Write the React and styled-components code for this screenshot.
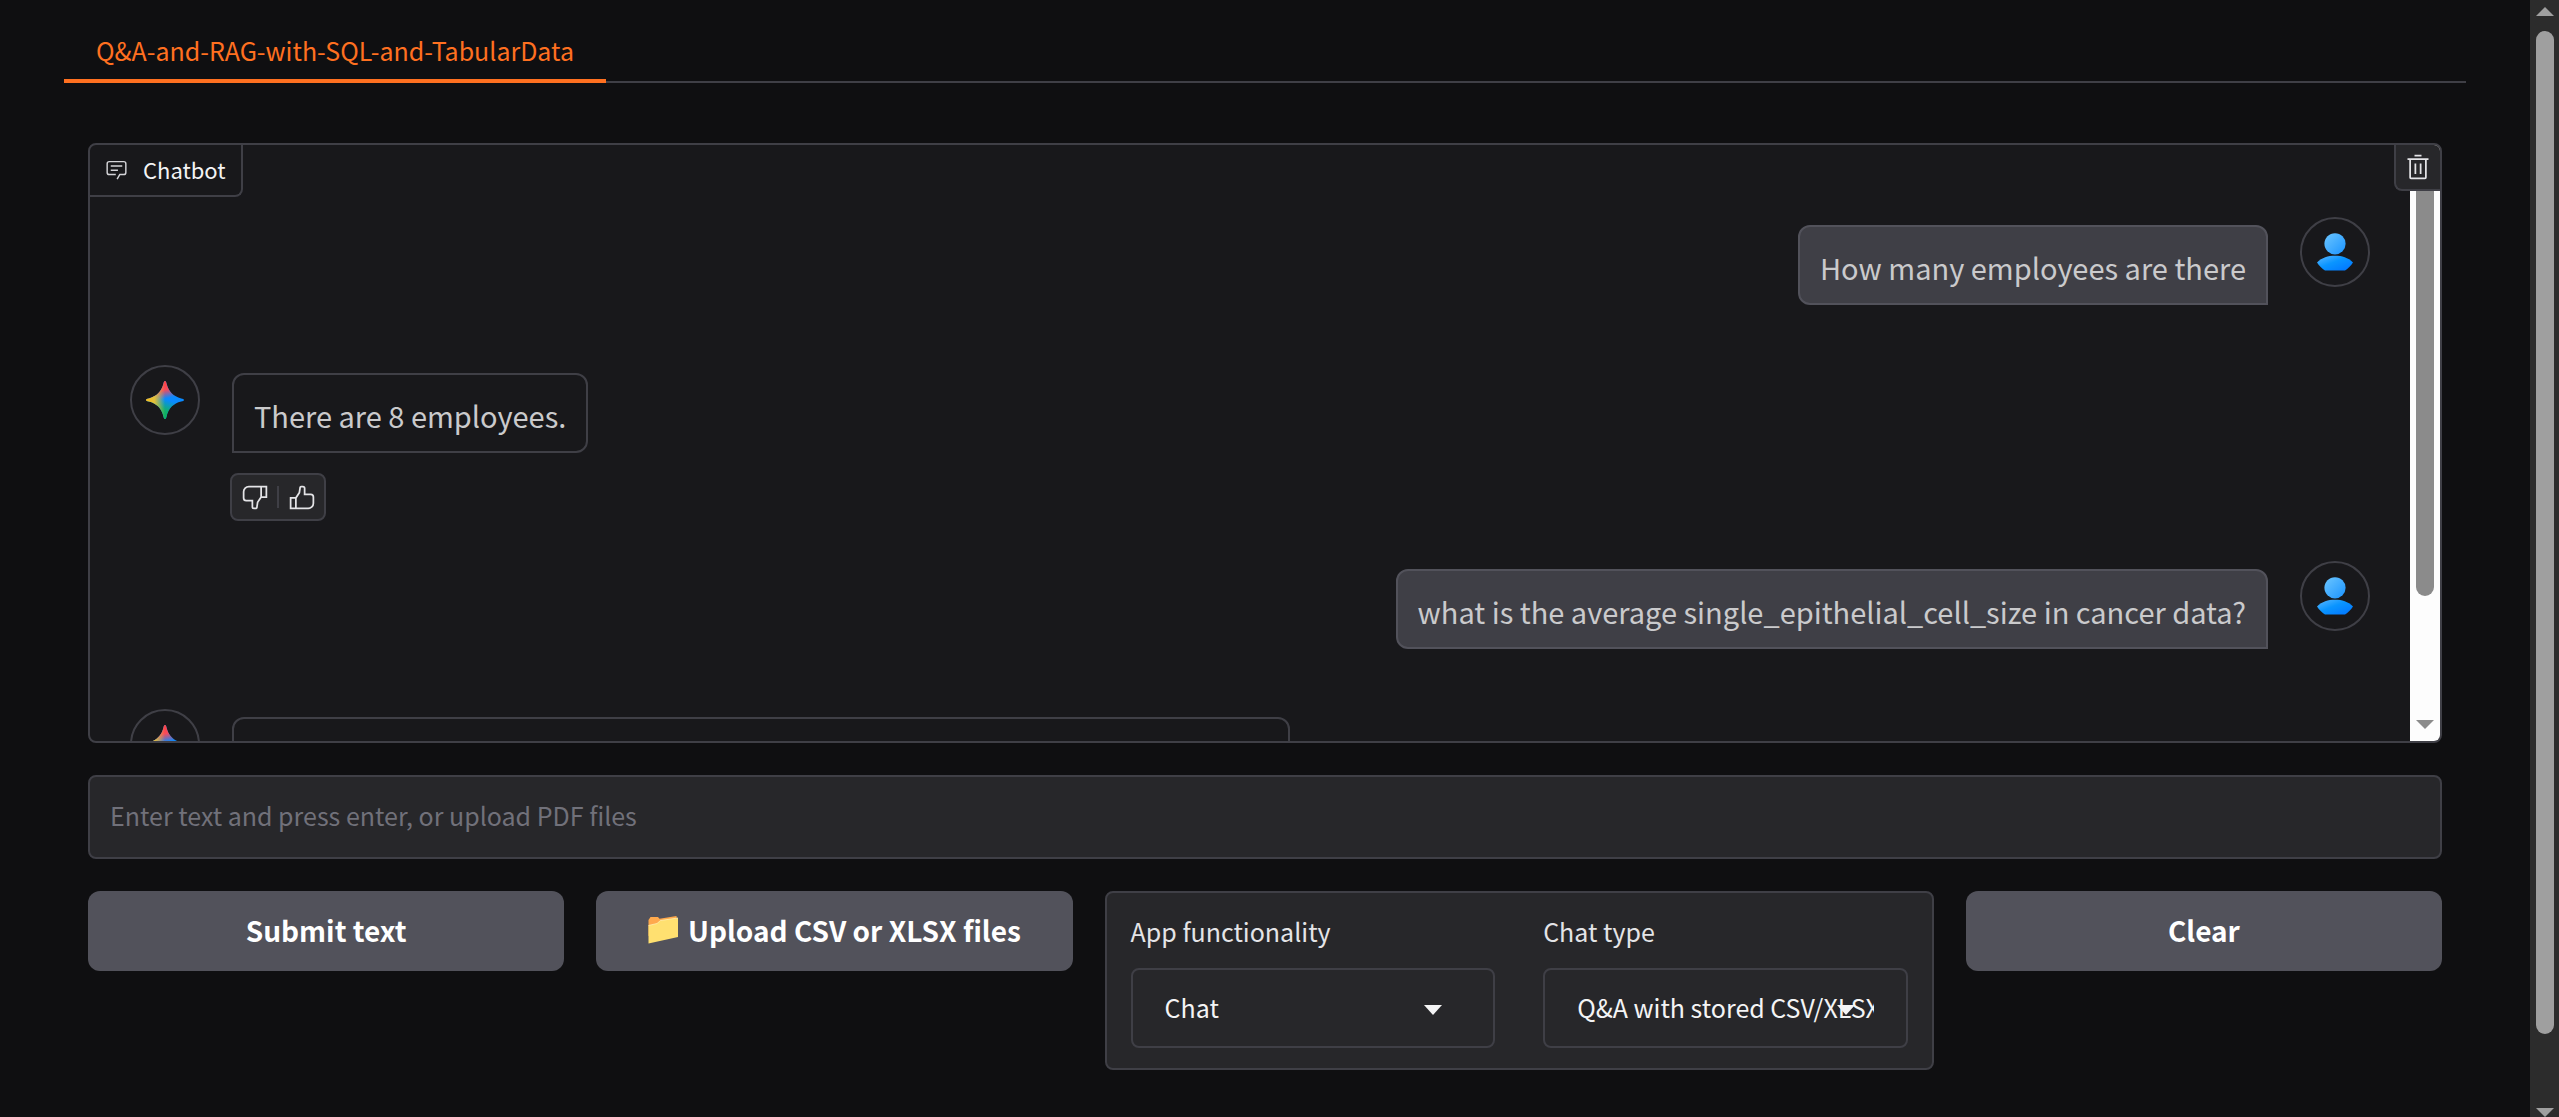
import React, { useId } from "react";
import styled, { createGlobalStyle, css } from "styled-components";

const color = {
  page: "#0f0f11",
  block: "#18181b",
  field: "#27272a",
  line: "#3f3f46",
  button: "#52525b",
  accent: "#ff7020",
  text: "#f4f4f5",
  muted: "#71717a",
};

const GlobalStyle = createGlobalStyle`
  *, *::before, *::after { box-sizing: border-box; }
  body {
    margin: 0;
    background: ${color.page};
    color: ${color.text};
    font-family: "Noto Sans CJK SC", "Noto Sans", sans-serif;
  }
  button, input, select { font: inherit; color: inherit; }
`;

const Shell = styled.div`
  display: grid;
  grid-template-columns: minmax(0, 1fr) 29px;
  height: 100vh;
  overflow: hidden;
`;

const Page = styled.main`
  padding: 20px 64px 0;
`;

const TabBar = styled.div`
  display: flex;
  height: 63px;
  border-bottom: 2px solid ${color.line};
`;

const Tab = styled.button`
  height: 63px;
  padding: 0 32px;
  border: 0;
  border-bottom: 4px solid ${color.accent};
  background: none;
  color: ${color.accent};
  font-size: 25px;
  line-height: 40px;
`;

const Panel = styled.div`
  display: flex;
  flex-direction: column;
  gap: 32px;
  padding: 60px 24px 0;
`;

const Chat = styled.section`
  position: relative;
  display: grid;
  grid-template-columns: minmax(0, 1fr) 30px;
  height: 600px;
  border: 2px solid ${color.line};
  border-radius: 8px;
  background: ${color.block};
  overflow: hidden;
`;

const ChatLabel = styled.div`
  position: absolute;
  top: 0;
  left: 0;
  display: flex;
  align-items: center;
  gap: 15px;
  height: 52px;
  padding: 0 15px 2px;
  border: solid ${color.line};
  border-width: 0 2px 2px 0;
  border-radius: 0 0 8px 0;
  font-size: 22px;
  line-height: 32px;
`;

const ClearButton = styled.button`
  position: absolute;
  top: 0;
  right: 0;
  display: grid;
  place-items: center;
  width: 46px;
  height: 46px;
  padding: 0;
  border: solid ${color.line};
  border-width: 0 0 2px 2px;
  border-radius: 0 0 0 8px;
  background: ${color.field};
`;

const Messages = styled.div`
  padding: 72px 40px 0;
  overflow: hidden;
`;

const Row = styled.div`
  display: flex;
  align-items: flex-start;
  gap: 32px;
  margin-bottom: ${(p) => (p.$user ? 60 : 40)}px;
  flex-direction: ${(p) => (p.$user ? "row-reverse" : "row")};
`;

const Avatar = styled.div`
  display: grid;
  place-items: center;
  flex: none;
  width: 70px;
  height: 70px;
  border: 2px solid ${color.line};
  border-radius: 50%;
`;

const Reply = styled.div`
  display: flex;
  flex-direction: column;
  align-items: flex-start;
  gap: 20px;
  padding-top: 8px;
  flex: ${(p) => (p.$long ? "0 0 47.25%" : "none")};
`;

const Bubble = styled.div`
  min-height: 80px;
  padding: 22px 20px 18px;
  border: 2px solid ${color.line};
  border-radius: 12px;
  font-size: 29px;
  line-height: 36px;
  color: #cacacc;
  ${(p) =>
    p.$user
      ? css`
          border-color: ${color.button};
          border-bottom-right-radius: 0;
          background: ${color.line};
        `
      : css`
          border-bottom-left-radius: 0;
        `}
  ${(p) => p.$long && "width: 100%;"}
`;

const Feedback = styled.div`
  display: flex;
  align-items: center;
  height: 48px;
  margin-left: -2px;
  border: 2px solid ${color.line};
  border-radius: 8px;
  background: ${color.field};
`;

const FeedbackButton = styled.button`
  display: grid;
  place-items: center;
  width: 45px;
  height: 44px;
  padding: 0;
  border: 0;
  background: none;
`;

const Divider = styled.span`
  width: 2px;
  height: 22px;
  background: ${color.line};
`;

const ScrollTrack = styled.div`
  display: flex;
  flex-direction: column;
  align-items: center;
  justify-content: space-between;
  padding: ${(p) => (p.$light ? "0 0 12px" : "7px 0 0")};
  background: ${(p) => (p.$light ? "#fdfdfd" : "#2c2c2c")};
  color: ${(p) => (p.$light ? "#8b8b8b" : "#9f9f9f")};
`;

const ScrollThumb = styled.div`
  width: 18px;
  height: ${(p) => p.$size};
  border-radius: ${(p) => (p.$light ? "0 0 9px 9px" : "9px")};
  margin-bottom: auto;
  margin-top: ${(p) => (p.$light ? 0 : 15)}px;
  background: currentColor;
`;

const Arrow = styled.span`
  border: 9px solid transparent;
  border-${(p) => (p.$up ? "bottom" : "top")}-color: currentColor;
  border-${(p) => (p.$up ? "top" : "bottom")}-width: 0;
`;

const TextInput = styled.input`
  display: block;
  width: 100%;
  height: 84px;
  padding: 0 20px 4px;
  border: 2px solid ${color.line};
  border-radius: 8px;
  background: ${color.field};
  font-size: 25px;
  &::placeholder { color: ${color.muted}; opacity: 1; }
`;

const Controls = styled.div`
  display: grid;
  grid-template-columns: 54fr 54fr 94fr 54fr;
  align-items: start;
  gap: 32px;
`;

const Button = styled.button`
  display: flex;
  align-items: center;
  justify-content: center;
  gap: 10px;
  height: 80px;
  padding: 0 0 2px;
  border: 0;
  border-radius: 12px;
  background: ${color.button};
  color: #fff;
  font-size: 28px;
  font-weight: 600;
`;

const Options = styled.div`
  display: grid;
  grid-template-columns: 1fr 1fr;
  gap: 48px;
  padding: 18px 24px 20px;
  border: 2px solid ${color.line};
  border-radius: 8px;
  background: ${color.field};
`;

const Field = styled.div`
  display: flex;
  flex-direction: column;
  gap: 17px;
  min-width: 0;
`;

const FieldLabel = styled.label`
  font-size: 25px;
  line-height: 40px;
  color: #e4e4e7;
`;

const SelectBox = styled.div`
  position: relative;
  svg {
    position: absolute;
    right: 53px;
    top: 37px;
    pointer-events: none;
  }
`;

const Select = styled.select`
  display: block;
  appearance: none;
  width: 100%;
  height: 80px;
  padding: 0 32px 3px;
  border: 2px solid ${color.line};
  border-radius: 8px;
  background: ${color.field};
  font-size: 25px;
`;

const ChatIcon = () => (
  <svg width="23" height="23" viewBox="0 0 32 32" fill="#d4d4d8" aria-hidden="true">
    <path d="M17.74 30L16 29l4-7h6a2 2 0 0 0 2-2V8a2 2 0 0 0-2-2H6a2 2 0 0 0-2 2v12a2 2 0 0 0 2 2h9v2H6a4 4 0 0 1-4-4V8a4 4 0 0 1 4-4h20a4 4 0 0 1 4 4v12a4 4 0 0 1-4 4h-4.84Z" />
    <path d="M8 10h16v2H8zm0 6h10v2H8z" />
  </svg>
);

const TrashIcon = () => (
  <svg width="28" height="28" viewBox="0 0 32 32" fill="#e4e4e7" aria-hidden="true">
    <path d="M12 12h2v12h-2zm6 0h2v12h-2z" />
    <path d="M4 6v2h2v20a2 2 0 0 0 2 2h16a2 2 0 0 0 2-2V8h2V6zm4 22V8h16v20zM12 2h8v2h-8z" />
  </svg>
);

const ThumbIcon = ({ down }) => (
  <svg width="28" height="28" viewBox="0 0 32 32" fill="#e4e4e7" aria-hidden="true">
    <path
      transform={down ? "rotate(180 16 16.5)" : undefined}
      d="M26 12h-6V6a3 3 0 0 0-3-3h-2.133a2.01 2.01 0 0 0-1.98 1.717l-.845 5.917L8.465 16H2v14h21a7 7 0 0 0 7-7v-7a4 4 0 0 0-4-4ZM8 28H4V18h4Zm20-5a5 5 0 0 1-5 5H10V17.303l3.958-5.937L14.867 5H17a1 1 0 0 1 1 1v8h8a2 2 0 0 1 2 2Z"
    />
  </svg>
);

const UserIcon = () => {
  const id = useId();
  return (
    <svg width="38" height="38" viewBox="0 0 38 38" aria-hidden="true">
      <defs>
        <linearGradient id={id + "h"} x1="0" y1="0" x2="1" y2="1">
          <stop offset="0" stopColor="#6cc6ff" />
          <stop offset="1" stopColor="#1a93ff" />
        </linearGradient>
        <linearGradient id={id + "b"} x1="0" y1="0" x2="1" y2="1">
          <stop offset="0" stopColor="#5cb8ff" />
          <stop offset=".45" stopColor="#0a95ff" />
          <stop offset="1" stopColor="#0072ff" />
        </linearGradient>
      </defs>
      <circle cx="19" cy="10.800" r="10.600" fill={`url(#${id}h)`} />
      <path d="M1 29.500C6 24.500 12 22.800 19 22.800s13 1.700 18 6.700c-2.200 3.600-5 6-8 8H9c-3-2-5.800-4.400-8-8Z" fill={`url(#${id}b)`} />
    </svg>
  );
};

const star = "M19 0C20 0 20.200 1.200 20.600 2.800 22.500 10.600 27.400 15.500 35.200 17.400 36.800 17.800 38 18 38 19s-1.200 1.200-2.800 1.600C27.400 22.500 22.500 27.400 20.600 35.200 20.200 36.800 20 38 19 38s-1.200-1.200-1.600-2.800C15.500 27.400 10.600 22.500 2.800 20.600 1.200 20.200 0 20 0 19s1.200-1.200 2.800-1.600C10.600 15.500 15.500 10.600 17.400 2.800 17.800 1.200 18 0 19 0Z";

const SparkIcon = () => {
  const id = useId();
  return (
    <svg width="38" height="38" viewBox="0 0 38 38" aria-hidden="true">
      <defs>
        <linearGradient id={id + "y"} x1="0" y1="0" x2="1" y2="0">
          <stop offset="0" stopColor="#fbbc1a" />
          <stop offset=".22" stopColor="#e2c03a" />
          <stop offset=".5" stopColor="#e2c03a" stopOpacity="0" />
        </linearGradient>
        <linearGradient id={id + "r"} x1=".44" y1="0" x2=".54" y2=".46">
          <stop offset="0" stopColor="#ff3f43" />
          <stop offset=".5" stopColor="#f8495a" />
          <stop offset="1" stopColor="#f8495a" stopOpacity="0" />
        </linearGradient>
        <linearGradient id={id + "g"} x1=".42" y1="1" x2=".58" y2=".5">
          <stop offset="0" stopColor="#08b25c" />
          <stop offset=".45" stopColor="#0eb06c" />
          <stop offset="1" stopColor="#0eb06c" stopOpacity="0" />
        </linearGradient>
      </defs>
      <path d={star} fill="#0a8aff" />
      <path d={star} fill={`url(#${id}g)`} />
      <path d={star} fill={`url(#${id}r)`} />
      <path d={star} fill={`url(#${id}y)`} />
    </svg>
  );
};

const FolderIcon = () => (
  <svg width="30" height="28" viewBox="0 0 30 28" aria-hidden="true">
    <path d="M.5 4 2.500 1h7.500l1.500 1.800L28.500 0l.5 5L.5 20Z" fill="#ffa94d" />
    <path d="M.5 9.500 9 7.500 12.500 4.500 30 2v19L.5 27.500Z" fill="#ffe070" />
    <path d="M.5 9.500 9 7.500 12.500 4.500 30 2" fill="none" stroke="#fff0b0" strokeWidth=".8" />
  </svg>
);

const Caret = () => (
  <svg width="18" height="10" viewBox="0 0 18 10" fill={color.text} aria-hidden="true">
    <path d="M0 0h18L9 10Z" />
  </svg>
);

const UserMessage = ({ children }) => (
  <Row $user>
    <Avatar><UserIcon /></Avatar>
    <Reply><Bubble $user>{children}</Bubble></Reply>
  </Row>
);

const BotMessage = ({ children, long }) => (
  <Row>
    <Avatar><SparkIcon /></Avatar>
    <Reply $long={long}>
      <Bubble $long={long}>{children}</Bubble>
      <Feedback>
        <FeedbackButton type="button" aria-label="Dislike"><ThumbIcon down /></FeedbackButton>
        <Divider />
        <FeedbackButton type="button" aria-label="Like"><ThumbIcon /></FeedbackButton>
      </Feedback>
    </Reply>
  </Row>
);

const Dropdown = ({ id, label, options }) => (
  <Field>
    <FieldLabel htmlFor={id}>{label}</FieldLabel>
    <SelectBox>
      <Select id={id}>
        {options.map((o) => <option key={o}>{o}</option>)}
      </Select>
      <Caret />
    </SelectBox>
  </Field>
);

export default function App() {
  return (
    <>
      <GlobalStyle />
      <Shell>
        <Page>
          <TabBar role="tablist">
            <Tab type="button" role="tab" aria-selected="true">Q&amp;A-and-RAG-with-SQL-and-TabularData</Tab>
          </TabBar>
          <Panel>
            <Chat aria-label="Chatbot">
              <Messages>
                <UserMessage>How many employees are there</UserMessage>
                <BotMessage>There are 8 employees.</BotMessage>
                <UserMessage>what is the average single_epithelial_cell_size in cancer data?</UserMessage>
                <BotMessage long />
              </Messages>
              <ScrollTrack $light>
                <ScrollThumb $light $size="451px" />
                <Arrow />
              </ScrollTrack>
              <ChatLabel><ChatIcon />Chatbot</ChatLabel>
              <ClearButton type="button" aria-label="Clear chat"><TrashIcon /></ClearButton>
            </Chat>
            <TextInput type="text" aria-label="Message" placeholder="Enter text and press enter, or upload PDF files" />
            <Controls>
              <Button type="button">Submit text</Button>
              <Button type="button"><FolderIcon />Upload CSV or XLSX files</Button>
              <Options>
                <Dropdown id="functionality" label="App functionality" options={["Chat"]} />
                <Dropdown id="chat-type" label="Chat type" options={["Q&A with stored CSV/XLSX"]} />
              </Options>
              <Button type="button">Clear</Button>
            </Controls>
          </Panel>
        </Page>
        <ScrollTrack>
          <Arrow $up />
          <ScrollThumb $size="90.4%" />
          <Arrow />
        </ScrollTrack>
      </Shell>
    </>
  );
}
